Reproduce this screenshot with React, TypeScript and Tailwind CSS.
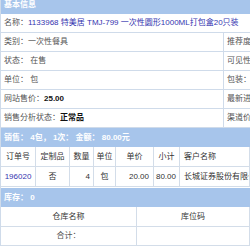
import React from "react";

const Row2 = ({ left, right }: { left: React.ReactNode; right: string }) => (
  <div className="flex h-[19px] border-b border-[#cfdbea]">
    <div className="flex-1 flex items-center pl-[3px] whitespace-nowrap overflow-hidden">{left}</div>
    <div className="w-[27px] flex items-center pl-[3px] border-l border-[#cfdbea] whitespace-nowrap overflow-hidden text-[#555]">
      {right}
    </div>
  </div>
);

export default function App() {
  const cell = "flex items-center border-r border-b border-[#d3dde9] whitespace-nowrap overflow-hidden";
  return (
    <div className="w-[250px] h-[250px] overflow-hidden bg-white text-[8px] leading-none text-[#555] font-['Liberation_Sans','Noto_Sans_CJK_SC',sans-serif]">
      <div className="border-l border-[#cfdbea]">
        <div className="-mt-[4px] h-[18px] bg-[#a7c5eb] text-white font-bold flex items-center pl-[3px]">基本信息</div>
        <div className="flex h-[19px] items-center border-b border-[#cfdbea] pl-[3px] whitespace-nowrap overflow-hidden">
          名称：<span className="text-[#3535b0]">1133968 特美居 TMJ-799 一次性圆形1000ML打包盒20只装</span>
        </div>
        <Row2 left={<span>类别：一次性餐具</span>} right="推荐度" />
        <Row2 left={<span>状态：&nbsp;在售</span>} right="可见性" />
        <Row2 left={<span>单位：&nbsp;包</span>} right="包装：" />
        <Row2 left={<span>网站售价：<b className="text-[#111]">25.00</b></span>} right="最新进" />
        <Row2 left={<span>销售分析状态：<b className="text-[#111]">正常品</b></span>} right="渠道价" />

        <div className="h-[19px] bg-[#a7c5eb] text-white font-bold flex items-center pl-[3px] whitespace-nowrap">
          销售：&nbsp;4包，&nbsp;1次：&nbsp;金额：&nbsp;80.00元
        </div>
        <div className="grid grid-cols-[35px_34px_24px_22px_38px_26px_1fr] text-[#333]">
          <div className={`${cell} h-[20px] justify-center`}>订单号</div>
          <div className={`${cell} h-[20px] justify-center`}>定制品</div>
          <div className={`${cell} h-[20px] justify-center`}>数量</div>
          <div className={`${cell} h-[20px] justify-center`}>单位</div>
          <div className={`${cell} h-[20px] justify-center`}>单价</div>
          <div className={`${cell} h-[20px] justify-center`}>小计</div>
          <div className={`${cell} h-[20px] pl-[4px]`}>客户名称</div>
          <div className={`${cell} h-[20px] justify-center text-[#3535b0]`}>196020</div>
          <div className={`${cell} h-[20px] justify-center`}>否</div>
          <div className={`${cell} h-[20px] justify-end pr-[3px]`}>4</div>
          <div className={`${cell} h-[20px] justify-center`}>包</div>
          <div className={`${cell} h-[20px] justify-end pr-[4px]`}>20.00</div>
          <div className={`${cell} h-[20px] justify-end pr-[3px]`}>80.00</div>
          <div className={`${cell} h-[20px] pl-[4px]`}>长城证券股份有限公司</div>
        </div>

        <div className="mt-[1px] h-[19px] bg-[#a7c5eb] text-white font-bold flex items-center pl-[3px]">库存：&nbsp;0</div>
        <div className="grid grid-cols-[136px_1fr] text-[#333]">
          <div className={`${cell} h-[20px] justify-center`}>仓库名称</div>
          <div className={`${cell} h-[20px] justify-center`}>库位码</div>
          <div className={`${cell} h-[19px] justify-center text-[#555]`}>合计：</div>
          <div className={`${cell} h-[19px]`}></div>
        </div>
      </div>
    </div>
  );
}
